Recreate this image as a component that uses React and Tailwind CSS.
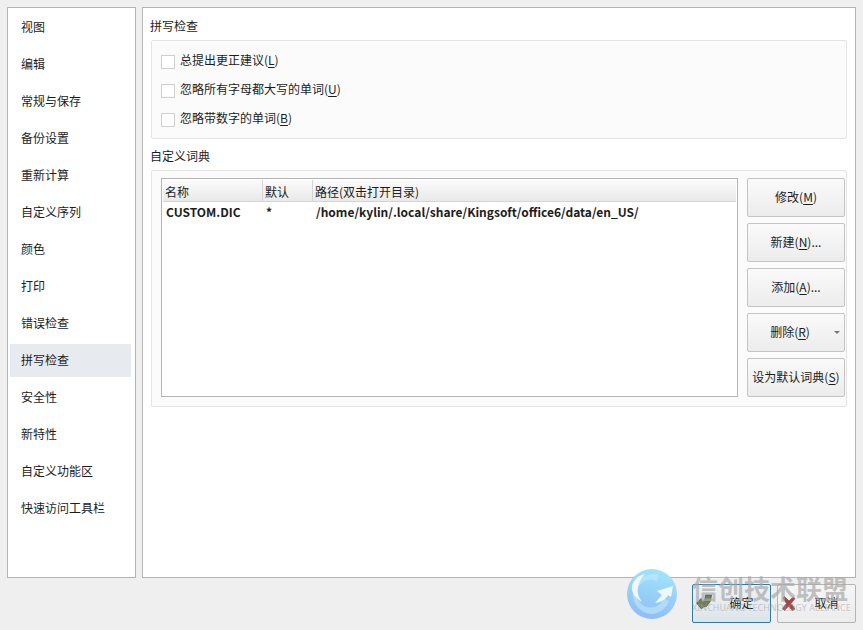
import React from "react";

const navItems = [
  "视图",
  "编辑",
  "常规与保存",
  "备份设置",
  "重新计算",
  "自定义序列",
  "颜色",
  "打印",
  "错误检查",
  "拼写检查",
  "安全性",
  "新特性",
  "自定义功能区",
  "快速访问工具栏",
];

const Key = ({ children }) => <span className="underline underline-offset-2">{children}</span>;

const CheckRow = ({ label, k }) => (
  <div className="flex items-center h-[29px]">
    <span className="w-[14px] h-[14px] mt-[2px] border border-[#cfcfcf] bg-white mr-[5px]" />
    <span className="pb-[2px]">
      {label}(<Key>{k}</Key>)
    </span>
  </div>
);

const SideButton = ({ children, arrow }) => (
  <button
    className={`relative w-[98px] h-[39px] pb-[2px] rounded-[2px] border border-[#c4c4c4] bg-gradient-to-b from-[#fafafa] to-[#ececec] flex items-center justify-center whitespace-nowrap text-[#1c1c1c] ${arrow ? "pr-[12px]" : ""}`}
  >
    {children}
    {arrow && (
      <span className="absolute right-[4px] top-[17px] w-0 h-0 border-x-[3px] border-x-transparent border-t-[3px] border-t-[#777]" />
    )}
  </button>
);

const Watermark = () => (
  <div className="absolute left-[627px] top-[569px] w-[226px] h-[52px] pointer-events-none z-10">
    <svg width="50" height="50" viewBox="0 0 50 50" className="absolute left-0 top-0">
      <defs>
        <linearGradient id="wm" x1="0.6" y1="0" x2="0.3" y2="1">
          <stop offset="0" stopColor="#a0e4fb" />
          <stop offset="1" stopColor="#8fbcf3" />
        </linearGradient>
      </defs>
      <circle cx="25" cy="25" r="25" fill="url(#wm)" />
      <path
        d="M32 6 A20 20 0 0 0 6 22 A20 20 0 0 0 24 45 A20 20 0 0 0 42 32 L37 29 A14 14 0 1 1 30 12 Z"
        fill="#c4ebfb"
        opacity="0.55"
      />
      <path d="M18 5 C9 7 4 14 5 21 C6 26 10 30 15 33 C11 27 9 21 12 15 C13 11 15 8 18 5 Z" fill="#eef8fd" />
      <path d="M46 17 L30 22 L35 26 L28 34 C35 33 39 30 41 26 L44 28 Z" fill="#eef8fd" />
    </svg>
    <div className="absolute left-[65px] top-[4px] text-[26px] leading-[30px] font-bold text-[#a8a8a8]/70 whitespace-nowrap">
      信创技术联盟
    </div>
    <div
      className="absolute left-[65px] top-[33px] text-[9px] leading-[12px] text-[#a8a8a8]/60 whitespace-nowrap"
      style={{ fontFamily: '"Noto Sans", sans-serif' }}
    >
      XINCHUANG TECHNOLOGY ALLIANCE
    </div>
  </div>
);

export default function App() {
  return (
    <div
      className="relative w-[863px] h-[630px] bg-[#efefef] text-[12px] text-[#1c1c1c] overflow-hidden flex flex-col px-[7px] pt-[7px]"
      style={{ fontFamily: '"Noto Sans CJK SC", "Noto Sans", sans-serif' }}
    >
      <div className="flex gap-[6px] h-[571px]">
        <div className="w-[129px] bg-white border border-[#b4b4b4] pt-[3px] pl-[2px] pr-[4px] flex flex-col gap-[4px]">
          {navItems.map((item) => (
            <div
              key={item}
              className={`h-[33px] pb-[2px] shrink-0 flex items-center pl-[11px] ${item === "拼写检查" ? "bg-[#e7eaee]" : ""}`}
            >
              {item}
            </div>
          ))}
        </div>

        <div className="flex-1 bg-white border border-[#b4b4b4] px-[8px] pt-[9px]">
          <div className="h-[18px] leading-[18px] -ml-[1px]">拼写检查</div>
          <div className="mt-[5px] h-[99px] bg-[#fbfbfb] border border-[#e4e4e4] rounded-[2px] px-[9px] pt-[5px]">
            <CheckRow label="总提出更正建议" k="L" />
            <CheckRow label="忽略所有字母都大写的单词" k="U" />
            <CheckRow label="忽略带数字的单词" k="B" />
          </div>

          <div className="mt-[8px] h-[18px] leading-[18px] -ml-[1px]">自定义词典</div>
          <div className="mt-[5px] h-[237px] bg-[#fbfbfb] border border-[#e4e4e4] rounded-[2px] pl-[9px] pt-[7px] flex gap-[9px]">
            <div className="w-[577px] h-[219px] bg-white border border-[#b4b4b4] p-[1px]">
              <div className="flex h-[22px] bg-gradient-to-b from-[#fbfbfb] to-[#e9e9e9] border-b border-[#d4d4d4] leading-[24px]">
                <div className="w-[100px] pl-[2px] border-r border-[#d4d4d4]">名称</div>
                <div className="w-[50px] pl-[2px] border-r border-[#d4d4d4]">默认</div>
                <div className="flex-1 pl-[2px]">路径(双击打开目录)</div>
              </div>
              <div className="flex h-[20px] items-center font-bold">
                <div className="w-[100px] pl-[3px]">CUSTOM.DIC</div>
                <div className="w-[50px] pl-[3px]">*</div>
                <div className="flex-1 pl-[3px]">/home/kylin/.local/share/Kingsoft/office6/data/en_US/</div>
              </div>
            </div>
            <div className="flex flex-col gap-[6px]">
              <SideButton>
                修改(<Key>M</Key>)
              </SideButton>
              <SideButton>
                新建(<Key>N</Key>)...
              </SideButton>
              <SideButton>
                添加(<Key>A</Key>)...
              </SideButton>
              <SideButton arrow>
                删除(<Key>R</Key>)
              </SideButton>
              <SideButton>
                设为默认词典(<Key>S</Key>)
              </SideButton>
            </div>
          </div>
        </div>
      </div>

      <div className="flex justify-end gap-[6px] mt-[6px]">
        <button className="relative w-[79px] h-[39px] pl-[20px] pb-[2px] rounded-[2px] border border-[#2f79a8] bg-gradient-to-b from-[#eef2f5] to-[#dde4ea] flex items-center justify-center">
          <svg width="16" height="16" viewBox="0 0 16 16" className="absolute left-[3px] top-[9px]">
            <path d="M0.5 9 L5 4.5 L6 7 L8.5 7 L9.5 1 L15.5 1 L14.5 7 L10.5 12.5 L7 13 L5.5 15 Z" fill="#6e7f5a" stroke="#4f5c3d" strokeWidth="0.8" />
          </svg>
          确定
        </button>
        <button className="relative w-[79px] h-[39px] pl-[20px] pb-[2px] rounded-[2px] border border-[#b4b4b4] bg-gradient-to-b from-[#f6f6f6] to-[#ececec] flex items-center justify-center">
          <svg width="14" height="15" viewBox="0 0 14 15" className="absolute left-[4px] top-[11px]">
            <path d="M2.5 0.5 L7 5 L11 1 L13 2.5 L9 7.5 L13 13 L10.5 14.5 L6.5 10 L2.5 14.5 L0.5 12.5 L4.5 7.5 L1 2 Z" fill="#ac4347" stroke="#6c5f60" strokeWidth="0.8" />
          </svg>
          取消
        </button>
      </div>

      <Watermark />
    </div>
  );
}
